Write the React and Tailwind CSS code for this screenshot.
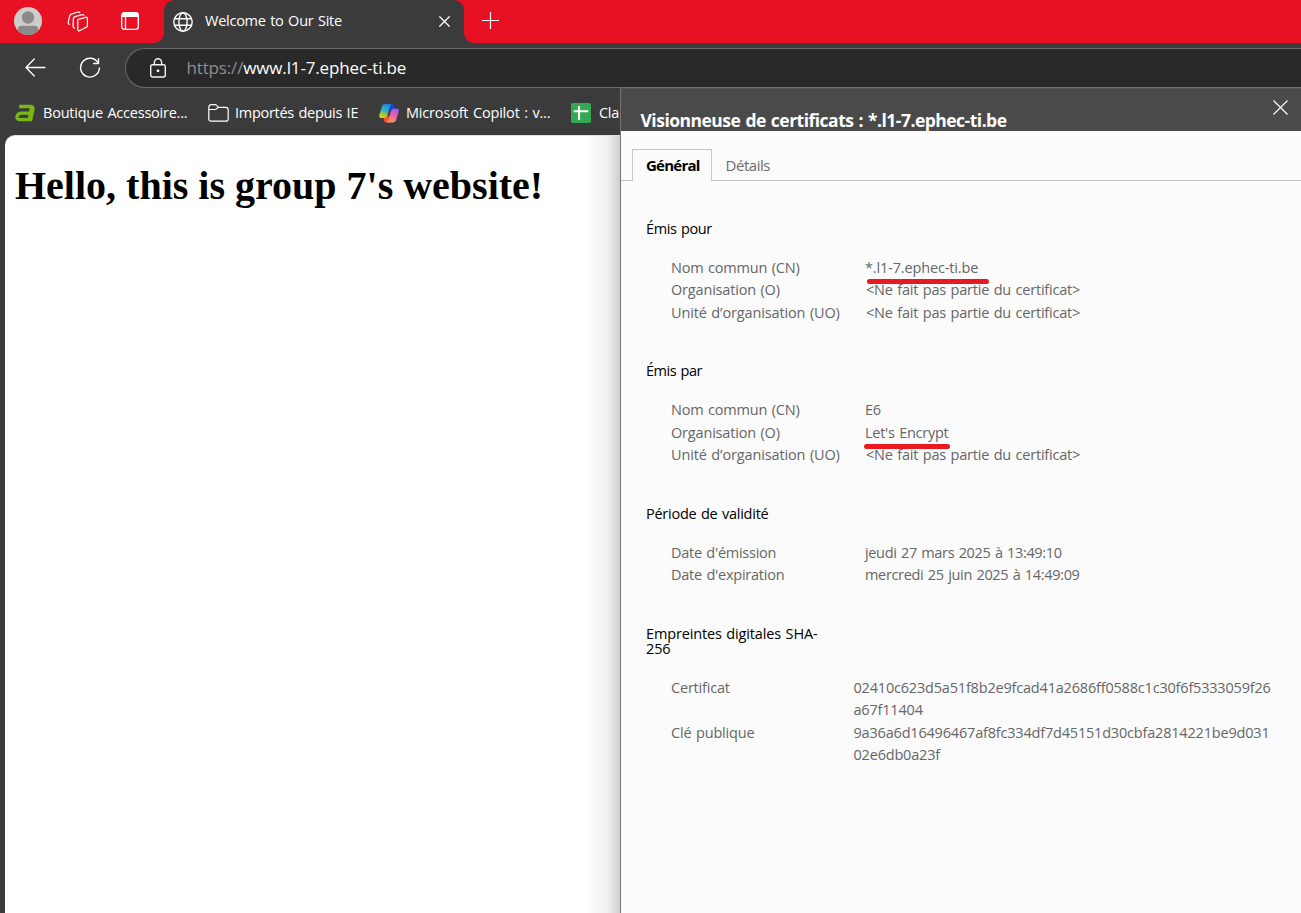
const ABSENT = "<Ne fait pas partie du certificat>";

function ProfileIcon() {
  return (
    <svg width="28" height="28" viewBox="0 0 28 28">
      <defs>
        <clipPath id="avatar"><circle cx="14" cy="14" r="14" /></clipPath>
      </defs>
      <circle cx="14" cy="14" r="14" fill="#cfcdcb" />
      <g clipPath="url(#avatar)" fill="#8c8a88">
        <circle cx="14" cy="10.500" r="6.200" />
        <path d="M3.500 24c0-3.600 1.200-5.300 4-5.300h13c2.800 0 4 1.700 4 5.300V28h-21z" />
      </g>
    </svg>
  );
}

function WorkspacesIcon() {
  return (
    <svg width="22" height="21" viewBox="0 0 22 21" fill="none" stroke="#fff" strokeWidth="1.250" strokeLinejoin="round" strokeLinecap="round">
      <path d="M11 8.500l7.600-2.200q1.800-.4 1.800 1.300v6.900q0 1.300-1.200 1.800l-6.700 3.400q-1.700.8-1.700-1.100V10q0-1.200.2-1.500z" />
      <path d="M16.800 4.300q-.5-1-1.700-.7L8 5.700q-1.500.5-1.600 1.900l-.3 7.700q0 1.400 1.300 2" />
      <path d="M12.600 1.600q-.5-.9-1.700-.6L4.400 3.100Q3 3.500 2.700 4.900l-1.400 6.300q-.3 1.500 1 2.200" />
    </svg>
  );
}

function TabActionsIcon() {
  return (
    <svg width="18" height="18" viewBox="0 0 18 18" fill="none">
      <rect x=".7" y=".7" width="16.600" height="16.600" rx="2.600" stroke="#fff" strokeWidth="1.300" />
      <path d="M.5 5V3Q.5.500 3 .5h12q2.500 0 2.500 2.500v2z" fill="#fff" />
      <path d="M4.500 5v12" stroke="#fff" strokeWidth="1.300" />
    </svg>
  );
}

function GlobeIcon() {
  return (
    <svg width="20" height="20" viewBox="0 0 20 20" fill="none" stroke="#fff" strokeWidth="1.400">
      <circle cx="10" cy="10" r="9.200" />
      <ellipse cx="10" cy="10" rx="4.100" ry="9.200" />
      <path d="M1.500 6.700h17M1.500 13.300h17" />
    </svg>
  );
}

function BackIcon() {
  return (
    <svg width="21" height="19" viewBox="0 0 21 19" fill="none" stroke="#fff" strokeWidth="1.300" strokeLinecap="round" strokeLinejoin="round">
      <path d="M9.300 1 1 9.500l8.300 8.500M1 9.500h19" />
    </svg>
  );
}

function ReloadIcon() {
  return (
    <svg width="22" height="22" viewBox="0 0 22 22" fill="none" stroke="#fff" strokeWidth="1.400" strokeLinecap="round" strokeLinejoin="round">
      <path d="M19.300 6.200A9.400 9.400 0 1 0 20.400 11" />
      <path d="M19.500 1.600v4.900h-4.800" />
    </svg>
  );
}

function LockIcon() {
  return (
    <svg width="16" height="20" viewBox="0 0 16 20" fill="none" stroke="#f2f2f2" strokeWidth="1.400">
      <rect x=".7" y="6.700" width="14.600" height="12.300" rx="1.900" />
      <path d="M4.400 6.700V4.300a3.600 3.600 0 0 1 7.200 0v2.400" />
      <circle cx="8" cy="12.800" r="1.400" fill="#fff" stroke="none" />
    </svg>
  );
}

function AcerIcon() {
  return (
    <svg width="21" height="18" viewBox="0 0 21 18" fill="none" stroke="#7cb518" strokeLinejoin="round">
      <path d="M4.200 2.500h11q3.400 0 2.700 3.200l-2.200 10H5.300q-3.900 0-3.300-3.200.7-3.300 4.700-3.300h9.600" strokeWidth="3.300" />
      <path d="M16.500 3.500 14 15.500" strokeWidth="3" />
    </svg>
  );
}

function FolderIcon() {
  return (
    <svg width="21" height="18" viewBox="0 0 21 18" fill="none" stroke="#fff" strokeWidth="1.200" strokeLinejoin="round">
      <path d="M.8 3.300Q.8.700 3.300.7h3.800q.9 0 1.500.7l1.900 1.900h7.200q2.500 0 2.500 2.500v8.900q0 2.500-2.500 2.500H3.300q-2.500 0-2.500-2.500z" />
      <path d="M.8 5.500h6.400q.8 0 1.400-.6l1.800-1.600" />
    </svg>
  );
}

function CopilotIcon() {
  return (
    <svg width="20" height="19" viewBox="0 0 20 19">
      <defs>
        <linearGradient id="cpl" x1="0.600" y1="0" x2="0.300" y2="1">
          <stop offset="0" stopColor="#1f8df0" />
          <stop offset=".45" stopColor="#31adc0" />
          <stop offset=".75" stopColor="#9fc63a" />
          <stop offset="1" stopColor="#f4c60c" />
        </linearGradient>
        <linearGradient id="cpr" x1="0.700" y1="0" x2="0.300" y2="1">
          <stop offset="0" stopColor="#a25af0" />
          <stop offset=".5" stopColor="#ee62a5" />
          <stop offset="1" stopColor="#ff9a58" />
        </linearGradient>
      </defs>
      <path d="M9 0h4.300Q14.800 0 15.300 1.800l1 3.200-5.500 2z" fill="#1747c8" />
      <path d="M4.500 13l4.800-2L11 18.500H7.200q-1.500 0-2-1.600z" fill="#f2542e" />
      <path d="M5.700.2h7q-1.200.4-1.700 2L8.300 11.500q-.8 2.400-3 2.400H2.100Q-.4 13.900.3 11L3 2.300Q3.700.200 5.700.200z" fill="url(#cpl)" />
      <path d="M14.300 18.500H7.600q1.200-.4 1.700-2l2.600-9.400q.8-2.400 3-2.400h3q2.500 0 1.800 2.900L17 16.400q-.7 2.100-2.700 2.100z" fill="url(#cpr)" />
    </svg>
  );
}

function SheetIcon() {
  return (
    <svg width="20" height="20" viewBox="0 0 20 20">
      <rect width="20" height="20" rx="1.800" fill="#34a853" />
      <path d="M2.700 8.300h14.600M8 3v14" stroke="#fff" strokeWidth="2.100" />
    </svg>
  );
}

function Cross({ className, stroke }) {
  return (
    <svg className={className} viewBox="0 0 16 16" fill="none" stroke="#fff" strokeWidth={stroke}>
      <path d="M.5.500l15 15M15.500.500l-15 15" />
    </svg>
  );
}

function Bookmark({ icon, label, className, text }) {
  return (
    <div className={`flex shrink-0 items-center whitespace-nowrap ${className}`}>
      <div className="w-[28px]">{icon}</div>
      <span className={text}>{label}</span>
    </div>
  );
}

function Row({ label, value, labelClass, valueClass, mark }) {
  return (
    <div className="flex h-[22.400px] items-center leading-[22px]">
      <div className="w-[194px]"><span className={labelClass}>{label}</span></div>
      <div className="relative">
        <span className={valueClass}>{value}</span>
        {mark && <div className={`absolute h-[5px] rounded-full bg-[#e81a1f] ${mark}`} />}
      </div>
    </div>
  );
}

function Section({ title, titleClass, className, children }) {
  return (
    <section className={className}>
      <h3 className="h-[15px] leading-[15px] text-black"><span className={titleClass}>{title}</span></h3>
      <div className="mt-[20.800px] pl-[25px] text-[#666]">{children}</div>
    </section>
  );
}

const CN = "tracking-[-0.200px]";
const ORG = "tracking-[-0.180px]";
const UNIT = "tracking-[-0.140px]";
const NONE = "ml-px tracking-[-0.210px]";

function CertificateDialog() {
  return (
    <div className="absolute top-[87px] left-[620px] flex h-[826px] w-[681px] flex-col border-t border-l border-[#727272] bg-[#fbfbfb]">
      <header className="flex h-[43px] shrink-0 items-start justify-between overflow-hidden border-t border-[#555] bg-[#4a4a4a] pr-[13px] pl-[19.500px] text-white">
        <h2 className="mt-[19px] text-[17.500px] leading-[24px] font-bold whitespace-nowrap"><span className="tracking-[-0.510px]">Visionneuse de certificats : *.l1-7.ephec-ti.be</span></h2>
        <Cross className="mt-[11px] size-[15px]" stroke={1.250} />
      </header>
      <nav className="flex h-[50px] shrink-0 items-end text-[15px]">
        <div className="h-full w-[11px] border-b border-[#c6c6c6]" />
        <div className="flex h-[32px] w-[80px] items-center border border-b-0 border-[#c6c6c6] pl-[13px] font-bold text-black"><span className="tracking-[-0.750px]">Général</span></div>
        <div className="flex h-[32px] flex-1 items-center border-b border-[#c6c6c6] pt-[2px] pl-[13.500px] text-[#6b6b6b]"><span className="tracking-[-0.450px]">Détails</span></div>
      </nav>
      <main className="pt-[40px] pl-[25px] text-[14.500px] whitespace-nowrap">
        <Section title="Émis pour" titleClass="tracking-[-0.370px]">
          <Row label="Nom commun (CN)" labelClass={CN} value="*.l1-7.ephec-ti.be" valueClass="tracking-[-0.150px]" mark="left-[2px] top-[22px] w-[122px]" />
          <Row label="Organisation (O)" labelClass={ORG} value={ABSENT} valueClass={NONE} />
          <Row label="Unité d’organisation (UO)" labelClass={UNIT} value={ABSENT} valueClass={NONE} />
        </Section>
        <Section title="Émis par" titleClass="tracking-[-0.450px]" className="mt-[39.300px]">
          <Row label="Nom commun (CN)" labelClass={CN} value="E6" valueClass="tracking-[-0.300px]" />
          <Row label="Organisation (O)" labelClass={ORG} value="Let's Encrypt" valueClass="tracking-[-0.260px]" mark="left-[-1px] top-[22px] w-[86px]" />
          <Row label="Unité d’organisation (UO)" labelClass={UNIT} value={ABSENT} valueClass={NONE} />
        </Section>
        <Section title="Période de validité" titleClass="tracking-[-0.250px]" className="mt-[39.700px]">
          <Row label="Date d'émission" labelClass="tracking-[-0.260px]" value="jeudi 27 mars 2025 à 13:49:10" valueClass="tracking-[-0.340px]" />
          <Row label="Date d'expiration" labelClass="tracking-[-0.240px]" value="mercredi 25 juin 2025 à 14:49:09" valueClass="tracking-[-0.330px]" />
        </Section>
        <section className="mt-[39.500px]">
          <h3 className="leading-[15px] tracking-[-0.150px] text-black">Empreintes digitales SHA-<br />256</h3>
          <div className="mt-[20.700px] grid grid-cols-[182.500px_auto] pl-[25px] leading-[22.400px] text-[#666]">
            <span className="tracking-[-0.200px]">Certificat</span>
            <span className="tracking-[-0.190px]">02410c623d5a51f8b2e9fcad41a2686ff0588c1c30f6f5333059f26<br />a67f11404</span>
            <span className="tracking-[-0.180px]">Clé publique</span>
            <span className="tracking-[-0.190px]">9a36a6d16496467af8fc334df7d45151d30cbfa2814221be9d031<br />02e6db0a23f</span>
          </div>
        </section>
      </main>
    </div>
  );
}

export default function App() {
  return (
    <div className="relative flex h-[913px] w-[1301px] flex-col overflow-hidden bg-[#3b3b3b] font-['Open_Sans','Noto_Sans',sans-serif] text-white [word-spacing:1px]">
      <div className="flex h-[43px] shrink-0">
        <div className="flex w-[164px] items-center rounded-br-[10px] bg-[#e81123] pb-px pl-[14px]">
          <ProfileIcon />
          <div className="ml-[25px]"><WorkspacesIcon /></div>
          <div className="ml-[32px]"><TabActionsIcon /></div>
        </div>
        <div className="w-[300px] bg-[#e81123]">
          <div className="flex h-full items-center rounded-t-[10px] bg-[#3b3b3b] pr-[14px] pl-[9px]">
            <GlobeIcon />
            <span className="ml-[12px] flex-1 pb-[2px] text-[14.500px] tracking-[-0.250px]">Welcome to Our Site</span>
            <Cross className="size-[11px]" stroke={1.900} />
          </div>
        </div>
        <div className="flex-1 rounded-bl-[10px] bg-[#e81123] pt-[12px] pl-[18px]">
          <svg width="17" height="17" viewBox="0 0 17 17" stroke="#fff" strokeWidth="1.200"><path d="M8.500 0v17M0 8.500h17" /></svg>
        </div>
      </div>
      <div className="flex h-[50px] shrink-0 items-center pl-[24.500px]">
        <div className="mb-px"><BackIcon /></div>
        <div className="ml-[33.500px]"><ReloadIcon /></div>
        <div className="ml-[24px] flex h-[40px] flex-1 items-center rounded-l-full border border-r-0 border-[#6b6b6b] bg-[#292929] pl-[24px]">
          <div className="mb-px"><LockIcon /></div>
          <div className="ml-[20.500px] pb-px text-[17px] whitespace-nowrap">
            <span className="tracking-[-0.150px] text-[#8f8f8f]">https://</span>
            <span className="tracking-[-0.150px]">www.l1-7.ephec-ti.be</span>
          </div>
        </div>
      </div>
      <div className="flex h-[42px] shrink-0 items-center pb-[2px] pl-[15px] text-[14.500px]">
        <Bookmark className="w-[192.500px]" icon={<AcerIcon />} label="Boutique Accessoire..." text="tracking-[-0.230px]" />
        <Bookmark className="w-[171px]" icon={<FolderIcon />} label="Importés depuis IE" text="-ml-[0.500px] tracking-[-0.280px]" />
        <Bookmark className="w-[192.500px]" icon={<CopilotIcon />} label="Microsoft Copilot : v..." text="-ml-[0.500px] tracking-[-0.180px]" />
        <Bookmark icon={<SheetIcon />} label="Cla" text="tracking-[-0.300px]" />
      </div>
      <div className="ml-[5px] flex flex-1 justify-between rounded-tl-[10px] border-t border-[#e0e0e0] bg-white">
        <h1 className="pt-[27px] pl-[10px] font-['Liberation_Serif',serif] text-[40px] leading-[46px] font-bold whitespace-nowrap text-black [word-spacing:0px]">Hello, this is group 7's website!</h1>
        <div className="mr-[681px] w-[36px] shrink-0 bg-linear-to-r from-white via-[#f1f1f1] via-65% to-[#cfcfcf]" />
      </div>
      <CertificateDialog />
    </div>
  );
}
